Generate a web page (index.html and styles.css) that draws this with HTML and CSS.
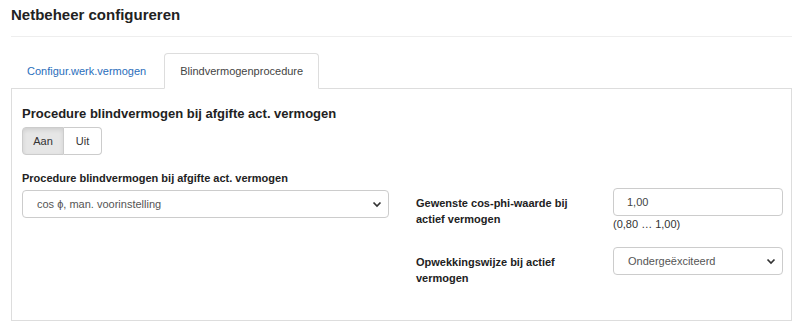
FILE: index.html
```html
<!DOCTYPE html>
<html lang="nl">
<head>
  <meta charset="UTF-8">
  <title>Netbeheer configureren</title>
  <link rel="stylesheet" href="styles.css">
</head>
<body>

  <div class="page">
    <h1 class="page-title">Netbeheer configureren</h1>

    <!-- Tabs -->
    <ul class="tabs">
      <li class="tab"><a href="#">Configur.werk.vermogen</a></li>
      <li class="tab active"><a href="#">Blindvermogenprocedure</a></li>
    </ul>

    <div class="tab-panel">
      <h2 class="section-title">Procedure blindvermogen bij afgifte act. vermogen</h2>
      <div class="toggle">
        <button class="toggle-btn on">Aan</button>
        <button class="toggle-btn">Uit</button>
      </div>

      <div class="form-row">
        <div class="col-left">
          <label class="field-label">Procedure blindvermogen bij afgifte act. vermogen</label>
          <div class="control select">
            <span>cos ϕ, man. voorinstelling</span>
            <svg class="chevron" width="10" height="7" viewBox="0 0 10 7"><path d="M1.5 1.5 L5 5 L8.5 1.5" fill="none" stroke="#333" stroke-width="1.7"/></svg>
          </div>
        </div>

        <div class="col-right">
          <div class="pair">
            <label class="pair-label">Gewenste cos-phi-waarde bij actief vermogen</label>
            <div>
              <input class="control" type="text" value="1,00">
              <div class="help">(0,80 … 1,00)</div>
            </div>
          </div>
          <div class="pair">
            <label class="pair-label">Opwekkingswijze bij actief vermogen</label>
            <div class="control select">
              <span>Ondergeëxciteerd</span>
              <svg class="chevron" width="10" height="7" viewBox="0 0 10 7"><path d="M1.5 1.5 L5 5 L8.5 1.5" fill="none" stroke="#333" stroke-width="1.7"/></svg>
            </div>
          </div>
        </div>
      </div>
    </div>
  </div>

</body>
</html>
```

FILE: styles.css
```css
body {
  margin: 0;
  font-family: "Liberation Sans", Arial, sans-serif;
  color: #333;
  background: #fff;
}

.page {
  padding: 6px 8px 0 11px;
}

.page-title {
  margin: 0;
  font-size: 15px;
  line-height: 18px;
  font-weight: bold;
  color: #222;
  padding-bottom: 12px;
  border-bottom: 1px solid #eee;
}

/* --- Tabs --- */
.tabs {
  list-style: none;
  margin: 16px 0 0;
  padding: 0;
  display: flex;
  border-bottom: 1px solid #ddd;
}

.tab {
  margin-bottom: -1px;
  margin-right: 2px;
}

.tab a {
  display: block;
  height: 34px;
  line-height: 34px;
  padding: 0 15px;
  font-size: 11px;
  color: #2a6ebb;
  text-decoration: none;
  border: 1px solid transparent;
  border-radius: 4px 4px 0 0;
}

.tab.active a {
  color: #444;
  background: #fff;
  border-color: #ddd;
  border-bottom-color: #fff;
}

/* --- Panel --- */
.tab-panel {
  border: 1px solid #ddd;
  border-top: none;
  padding: 16px 10px 34px 10px;
}

.section-title {
  margin: 0;
  font-size: 13px;
  line-height: 18px;
  font-weight: bold;
  color: #222;
}

.toggle {
  display: inline-flex;
  margin-top: 4px;
}

.toggle-btn {
  height: 28px;
  font-family: inherit;
  font-size: 11px;
  color: #333;
  background: #fff;
  border: 1px solid #ccc;
  cursor: pointer;
}

.toggle-btn:first-child {
  border-radius: 4px 0 0 4px;
  width: 42px;
}

.toggle-btn:last-child {
  border-radius: 0 4px 4px 0;
  border-left: none;
  width: 38px;
}

.toggle-btn.on {
  background: #e6e6e6;
  box-shadow: inset 0 2px 4px rgba(0,0,0,0.1);
}

.form-row {
  display: grid;
  grid-template-columns: 367px 395px;
  column-gap: 27px;
  margin-top: 16px;
}

.field-label {
  display: block;
  font-size: 11px;
  line-height: 15px;
  font-weight: bold;
  color: #222;
  margin-bottom: 4px;
}

.control {
  display: block;
  width: 100%;
  height: 28px;
  box-sizing: border-box;
  padding: 0 13px;
  font-family: inherit;
  font-size: 11px;
  color: #444;
  background: #fff;
  border: 1px solid #ccc;
  border-radius: 4px;
}

.select {
  display: flex;
  align-items: center;
  justify-content: space-between;
  padding: 0 6px 0 14px;
  color: #555;
  cursor: pointer;
}

.chevron {
  flex: none;
  margin-top: 1px;
}

.col-right {
  margin-top: 17px;
}

.pair {
  display: grid;
  grid-template-columns: 197px 170px;
  margin-bottom: 16px;
}

.pair:last-child {
  margin-bottom: 0;
}

.pair-label {
  padding-top: 7px;
  padding-right: 20px;
  font-size: 11px;
  line-height: 16px;
  font-weight: bold;
  color: #222;
}

.help {
  font-size: 11px;
  line-height: 14px;
  margin-top: 1px;
  color: #333;
}
```
